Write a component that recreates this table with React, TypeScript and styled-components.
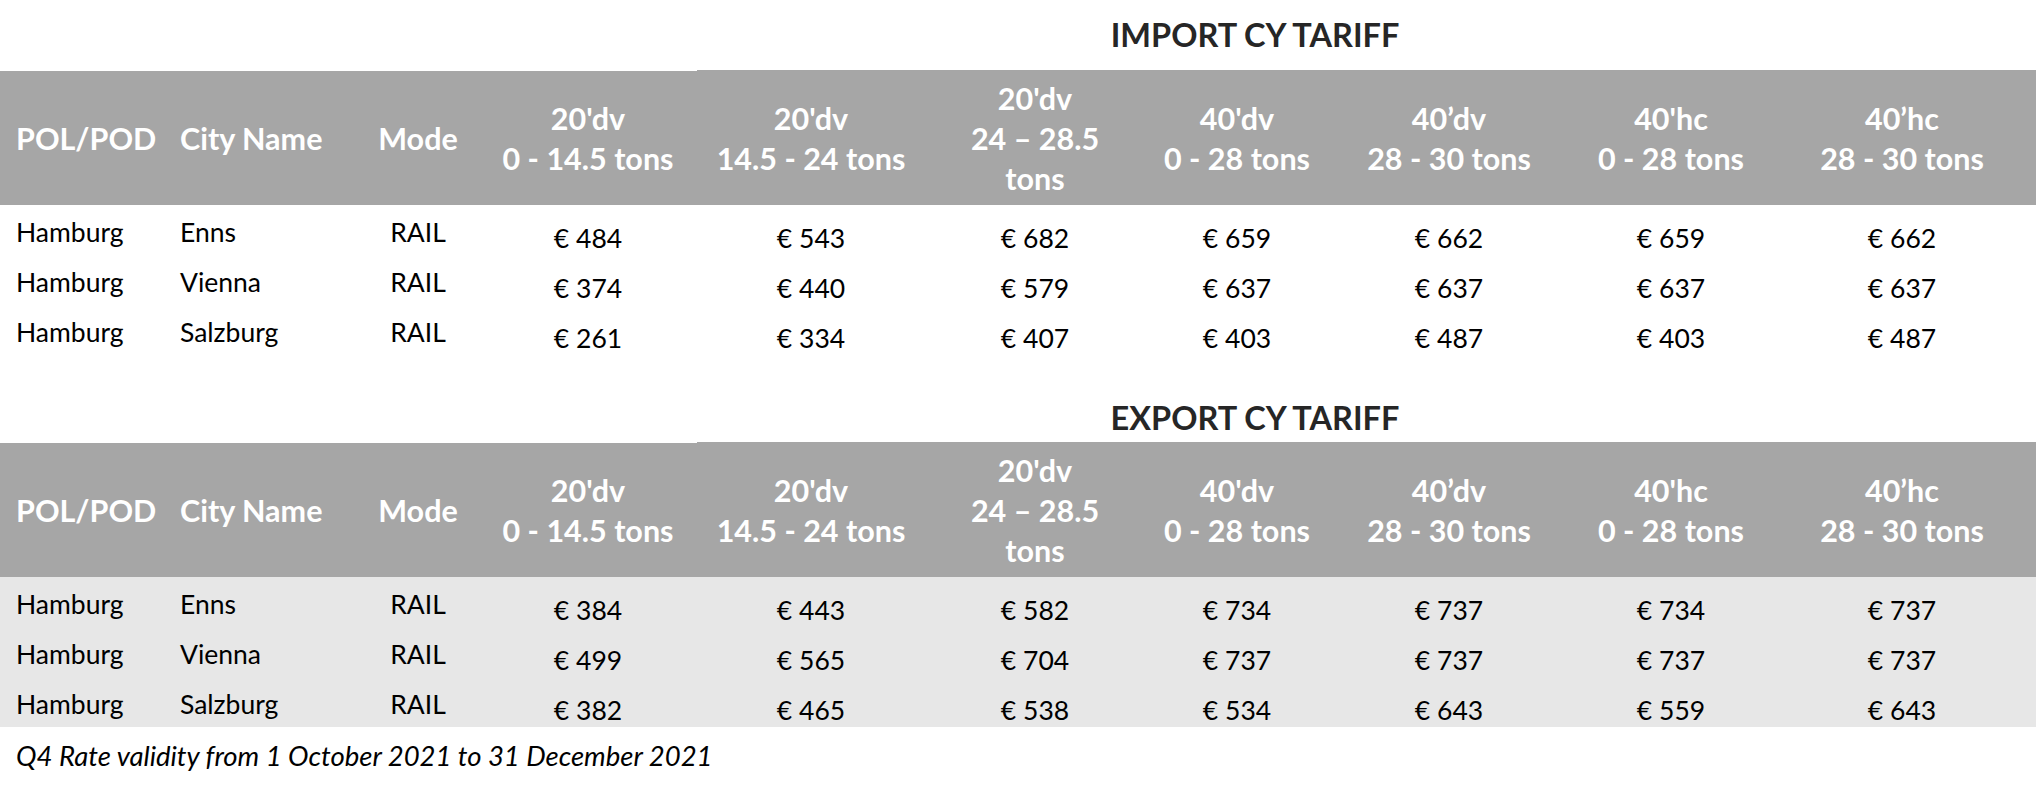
import React from "react";
import styled, { createGlobalStyle } from "styled-components";

const GlobalStyle = createGlobalStyle`
  html, body {
    margin: 0;
    padding: 0;
    background: #ffffff;
  }
  body {
    font-family: Lato, "Open Sans", sans-serif;
    color: #000000;
  }
`;

// column widths taken from the reference sheet
const COLUMNS = "164px 193px 122px 218px 228px 220px 184px 240px 204px 258px";

type Rate = { pol: string; city: string; mode: string; prices: number[] };

const HEADERS: { lines: string[]; align: "left" | "center"; lead?: boolean }[] = [
  { lines: ["POL/POD"], align: "left", lead: true },
  { lines: ["City Name"], align: "left", lead: true },
  { lines: ["Mode"], align: "center", lead: true },
  { lines: ["20'dv", "0 - 14.5 tons"], align: "center", lead: true },
  { lines: ["20'dv", "14.5 - 24 tons"], align: "center" },
  { lines: ["20'dv", "24 – 28.5", "tons"], align: "center" },
  { lines: ["40'dv", "0 - 28 tons"], align: "center" },
  { lines: ["40’dv", "28 - 30 tons"], align: "center" },
  { lines: ["40'hc", "0 - 28 tons"], align: "center" },
  { lines: ["40’hc", "28 - 30 tons"], align: "center" },
];

const IMPORT_RATES: Rate[] = [
  { pol: "Hamburg", city: "Enns", mode: "RAIL", prices: [484, 543, 682, 659, 662, 659, 662] },
  { pol: "Hamburg", city: "Vienna", mode: "RAIL", prices: [374, 440, 579, 637, 637, 637, 637] },
  { pol: "Hamburg", city: "Salzburg", mode: "RAIL", prices: [261, 334, 407, 403, 487, 403, 487] },
];

const EXPORT_RATES: Rate[] = [
  { pol: "Hamburg", city: "Enns", mode: "RAIL", prices: [384, 443, 582, 734, 737, 734, 737] },
  { pol: "Hamburg", city: "Vienna", mode: "RAIL", prices: [499, 565, 704, 737, 737, 737, 737] },
  { pol: "Hamburg", city: "Salzburg", mode: "RAIL", prices: [382, 465, 538, 534, 643, 559, 643] },
];

const Page = styled.div`
  width: 2036px;
  min-height: 795px;
  display: flex;
  flex-direction: column;
`;

const Section = styled.section<{ $gap: number }>`
  margin-top: ${(p) => p.$gap}px;
  display: flex;
  flex-direction: column;
`;

const TitleRow = styled.div<{ $height: number }>`
  display: grid;
  grid-template-columns: ${COLUMNS};
  height: ${(p) => p.$height}px;
  align-items: center;
`;

const Title = styled.h2`
  grid-column: 4 / -1;
  margin: 0;
  text-align: center;
  font-size: 32.5px;
  line-height: 40px;
  font-weight: 700;
  color: #262626;
`;

const HeaderRow = styled.div`
  display: grid;
  grid-template-columns: ${COLUMNS};
  height: 135px;
  background: #a6a6a6;
`;

const HeaderCell = styled.div<{ $align: "left" | "center"; $lead?: boolean }>`
  display: flex;
  flex-direction: column;
  justify-content: center;
  align-items: ${(p) => (p.$align === "left" ? "flex-start" : "center")};
  padding-left: ${(p) => (p.$align === "left" ? "16px" : "0")};
  border-top: 1px solid ${(p) => (p.$lead ? "#ffffff" : "#a6a6a6")};
  color: #ffffff;
  font-weight: 700;
  font-size: 30.5px;
  line-height: 40px;
  white-space: nowrap;
`;

const Body = styled.div<{ $shaded?: boolean }>`
  background: ${(p) => (p.$shaded ? "#e7e7e7" : "#ffffff")};
`;

const Row = styled.div`
  display: grid;
  grid-template-columns: ${COLUMNS};
  height: 50px;
`;

const Cell = styled.div<{ $align: "left" | "center"; $drop?: boolean }>`
  padding-top: ${(p) => (p.$drop ? "18px" : "12px")};
  padding-left: ${(p) => (p.$align === "left" ? "16px" : "0")};
  text-align: ${(p) => p.$align};
  font-size: 26.5px;
  line-height: 30px;
  white-space: nowrap;
`;

const Footnote = styled.p`
  margin: 14px 0 0;
  padding-left: 16px;
  font-style: italic;
  font-size: 27.5px;
  line-height: 30px;
`;

function Tariff({
  title,
  rates,
  shaded,
  titleHeight,
  gap,
}: {
  title: string;
  rates: Rate[];
  shaded?: boolean;
  titleHeight: number;
  gap: number;
}) {
  return (
    <Section $gap={gap}>
      <TitleRow $height={titleHeight}>
        <Title>{title}</Title>
      </TitleRow>
      <HeaderRow>
        {HEADERS.map((h, i) => (
          <HeaderCell key={i} $align={h.align} $lead={h.lead}>
            {h.lines.map((l) => (
              <span key={l}>{l}</span>
            ))}
          </HeaderCell>
        ))}
      </HeaderRow>
      <Body $shaded={shaded}>
        {rates.map((r) => (
          <Row key={r.city}>
            <Cell $align="left">{r.pol}</Cell>
            <Cell $align="left">{r.city}</Cell>
            <Cell $align="center">{r.mode}</Cell>
            {r.prices.map((p, i) => (
              <Cell key={i} $align="center" $drop>
                € {p}
              </Cell>
            ))}
          </Row>
        ))}
      </Body>
    </Section>
  );
}

export default function App() {
  return (
    <Page>
      <GlobalStyle />
      <Tariff title="IMPORT CY TARIFF" rates={IMPORT_RATES} titleHeight={70} gap={0} />
      <Tariff title="EXPORT CY TARIFF" rates={EXPORT_RATES} shaded titleHeight={48} gap={39} />
      <Footnote>Q4 Rate validity from 1 October 2021 to 31 December 2021</Footnote>
    </Page>
  );
}
